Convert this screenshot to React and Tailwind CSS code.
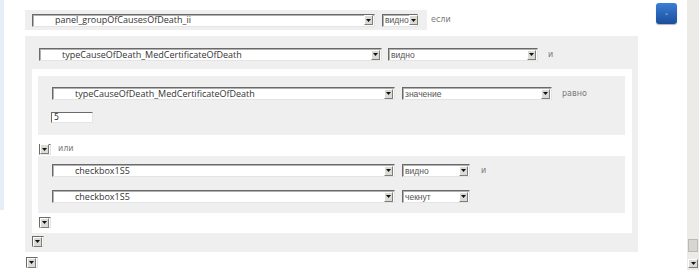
import React from "react";

const font = { fontFamily: '"Open Sans", "DejaVu Sans", sans-serif' };

function Arrow() {
  return (
    <div className="w-[9px] h-[10px] shrink-0 bg-[#dcdad4] border-t border-l border-t-white border-l-white border-b border-r border-b-[#7d7d7d] border-r-[#7d7d7d] flex items-center justify-center">
      <svg width="5" height="3" viewBox="0 0 5 3">
        <polygon points="0,0 5,0 2.5,3" fill="#111" />
      </svg>
    </div>
  );
}

function Select({ w, text, opt = false }) {
  return (
    <div
      className="h-[13px] bg-white border-t border-l border-t-[#6a6a6a] border-l-[#6a6a6a] border-b border-r border-b-[#e4e4e4] border-r-[#e4e4e4] shadow-[inset_1px_1px_0_#b0b0b0] flex items-center justify-between pr-[1px] shrink-0"
      style={{ width: w }}
    >
      <span
        className={`${opt ? "pl-[2px] text-[8.5px] text-[#555] font-['Liberation_Sans']" : "pl-[22px] text-[9px] text-[#333] font-['Open_Sans']"} leading-[12px] whitespace-nowrap`}
      >
        {text}
      </span>
      <Arrow />
    </div>
  );
}

function DropBtn() {
  return (
    <div className="w-[12px] h-[11px] bg-white border-t border-l border-t-[#6a6a6a] border-l-[#6a6a6a] border-b border-r border-b-[#e4e4e4] border-r-[#e4e4e4] flex items-center justify-end pr-[1px]">
      <Arrow />
    </div>
  );
}

function Label({ children, className = "" }) {
  return (
    <span className={`text-[8px] text-[#777] font-['DejaVu_Sans'] leading-[12px] ${className}`}>
      {children}
    </span>
  );
}

export default function App() {
  return (
    <div className="w-[699px] h-[270px] bg-white overflow-hidden flex" style={font}>
      <div className="w-[4px] h-[210px] bg-[#e4edf8] shrink-0" />
      <div className="flex pl-[21px]">
        <div className="w-[613px] pt-[10px] flex flex-col">
          {/* row 1 */}
          <div className="flex items-center">
            <div className="h-[20px] w-[402px] bg-[#efefef] flex items-center pl-[7px] gap-[7px]">
              <Select w={343} text="panel_groupOfCausesOfDeath_ii" />
              <Select w={36} text="видно" opt />
            </div>
            <Label className="ml-[4px]">если</Label>
          </div>

          {/* outer gray */}
          <div className="mt-[6px] h-[216px] bg-[#efefef] flex flex-col pt-[12px]">
            <div className="flex items-center pl-[14px] gap-[6px]">
              <Select w={343} text="typeCauseOfDeath_MedCertificateOfDeath" />
              <Select w={150} text="видно" opt />
              <Label className="ml-[4px]">и</Label>
            </div>

            <div className="mt-[8px] ml-[7px] w-[600px] h-[164px] bg-white flex flex-col">
              <div className="mt-[7px] ml-[6px] w-[587px] h-[59px] bg-[#efefef] flex flex-col pt-[11px] pl-[14px]">
                <div className="flex items-center gap-[7px]">
                  <Select w={343} text="typeCauseOfDeath_MedCertificateOfDeath" />
                  <Select w={150} text="значение" opt />
                  <Label className="ml-[3px]">равно</Label>
                </div>
                <div className="mt-[12px] -ml-[1px] w-[42px] h-[11px] bg-white border-t border-l border-t-[#6a6a6a] border-l-[#6a6a6a] border-b border-r border-b-[#e4e4e4] border-r-[#e4e4e4] flex items-center pl-[2px]">
                  <span className="text-[8px] text-[#333] leading-[10px] font-['DejaVu_Sans']">5</span>
                </div>
              </div>

              <div className="mt-[8px] ml-[7px] flex items-center gap-[7px]">
                <DropBtn />
                <Label>или</Label>
              </div>

              <div className="mt-[1px] ml-[6px] w-[587px] h-[57px] bg-[#efefef] flex flex-col pt-[8px] pl-[14px] gap-[13px]">
                <div className="flex items-center gap-[7px]">
                  <Select w={343} text="checkbox1S5" />
                  <Select w={68} text="видно" opt />
                  <Label className="ml-[4px]">и</Label>
                </div>
                <div className="flex items-center gap-[7px]">
                  <Select w={343} text="checkbox1S5" />
                  <Select w={68} text="чекнут" opt />
                </div>
              </div>

              <div className="mt-[4px] ml-[7px]">
                <DropBtn />
              </div>
            </div>

            <div className="mt-[3px] ml-[7px]">
              <DropBtn />
            </div>
          </div>

          <div className="mt-[5px] ml-[1px]">
            <DropBtn />
          </div>
        </div>

        <div className="ml-[18px] pt-[3px]">
          <div className="w-[21px] h-[21px] rounded-[3px] bg-gradient-to-b from-[#3b7fd6] to-[#1a4e9b] shadow-[0_1px_1px_rgba(0,0,0,0.3)] flex items-center justify-center">
            <span className="text-[7px] text-white leading-[8px] font-['DejaVu_Sans']">-</span>
          </div>
        </div>
      </div>
      <div className="ml-[10px] w-[12px] h-full bg-[#ecebe8] flex flex-col justify-end items-center pb-[2px]">
        <div className="w-[10px] h-[13px] bg-[#d8d6d0] border border-[#bcbab4]" />
        <div className="mt-[7px] w-[10px] h-[9px] bg-[#dcdad4] border-t border-l border-white border-b border-r border-b-[#7d7d7d] border-r-[#7d7d7d] flex items-center justify-center">
          <svg width="5" height="3" viewBox="0 0 5 3">
            <polygon points="0,0 5,0 2.5,3" fill="#111" />
          </svg>
        </div>
      </div>
    </div>
  );
}
